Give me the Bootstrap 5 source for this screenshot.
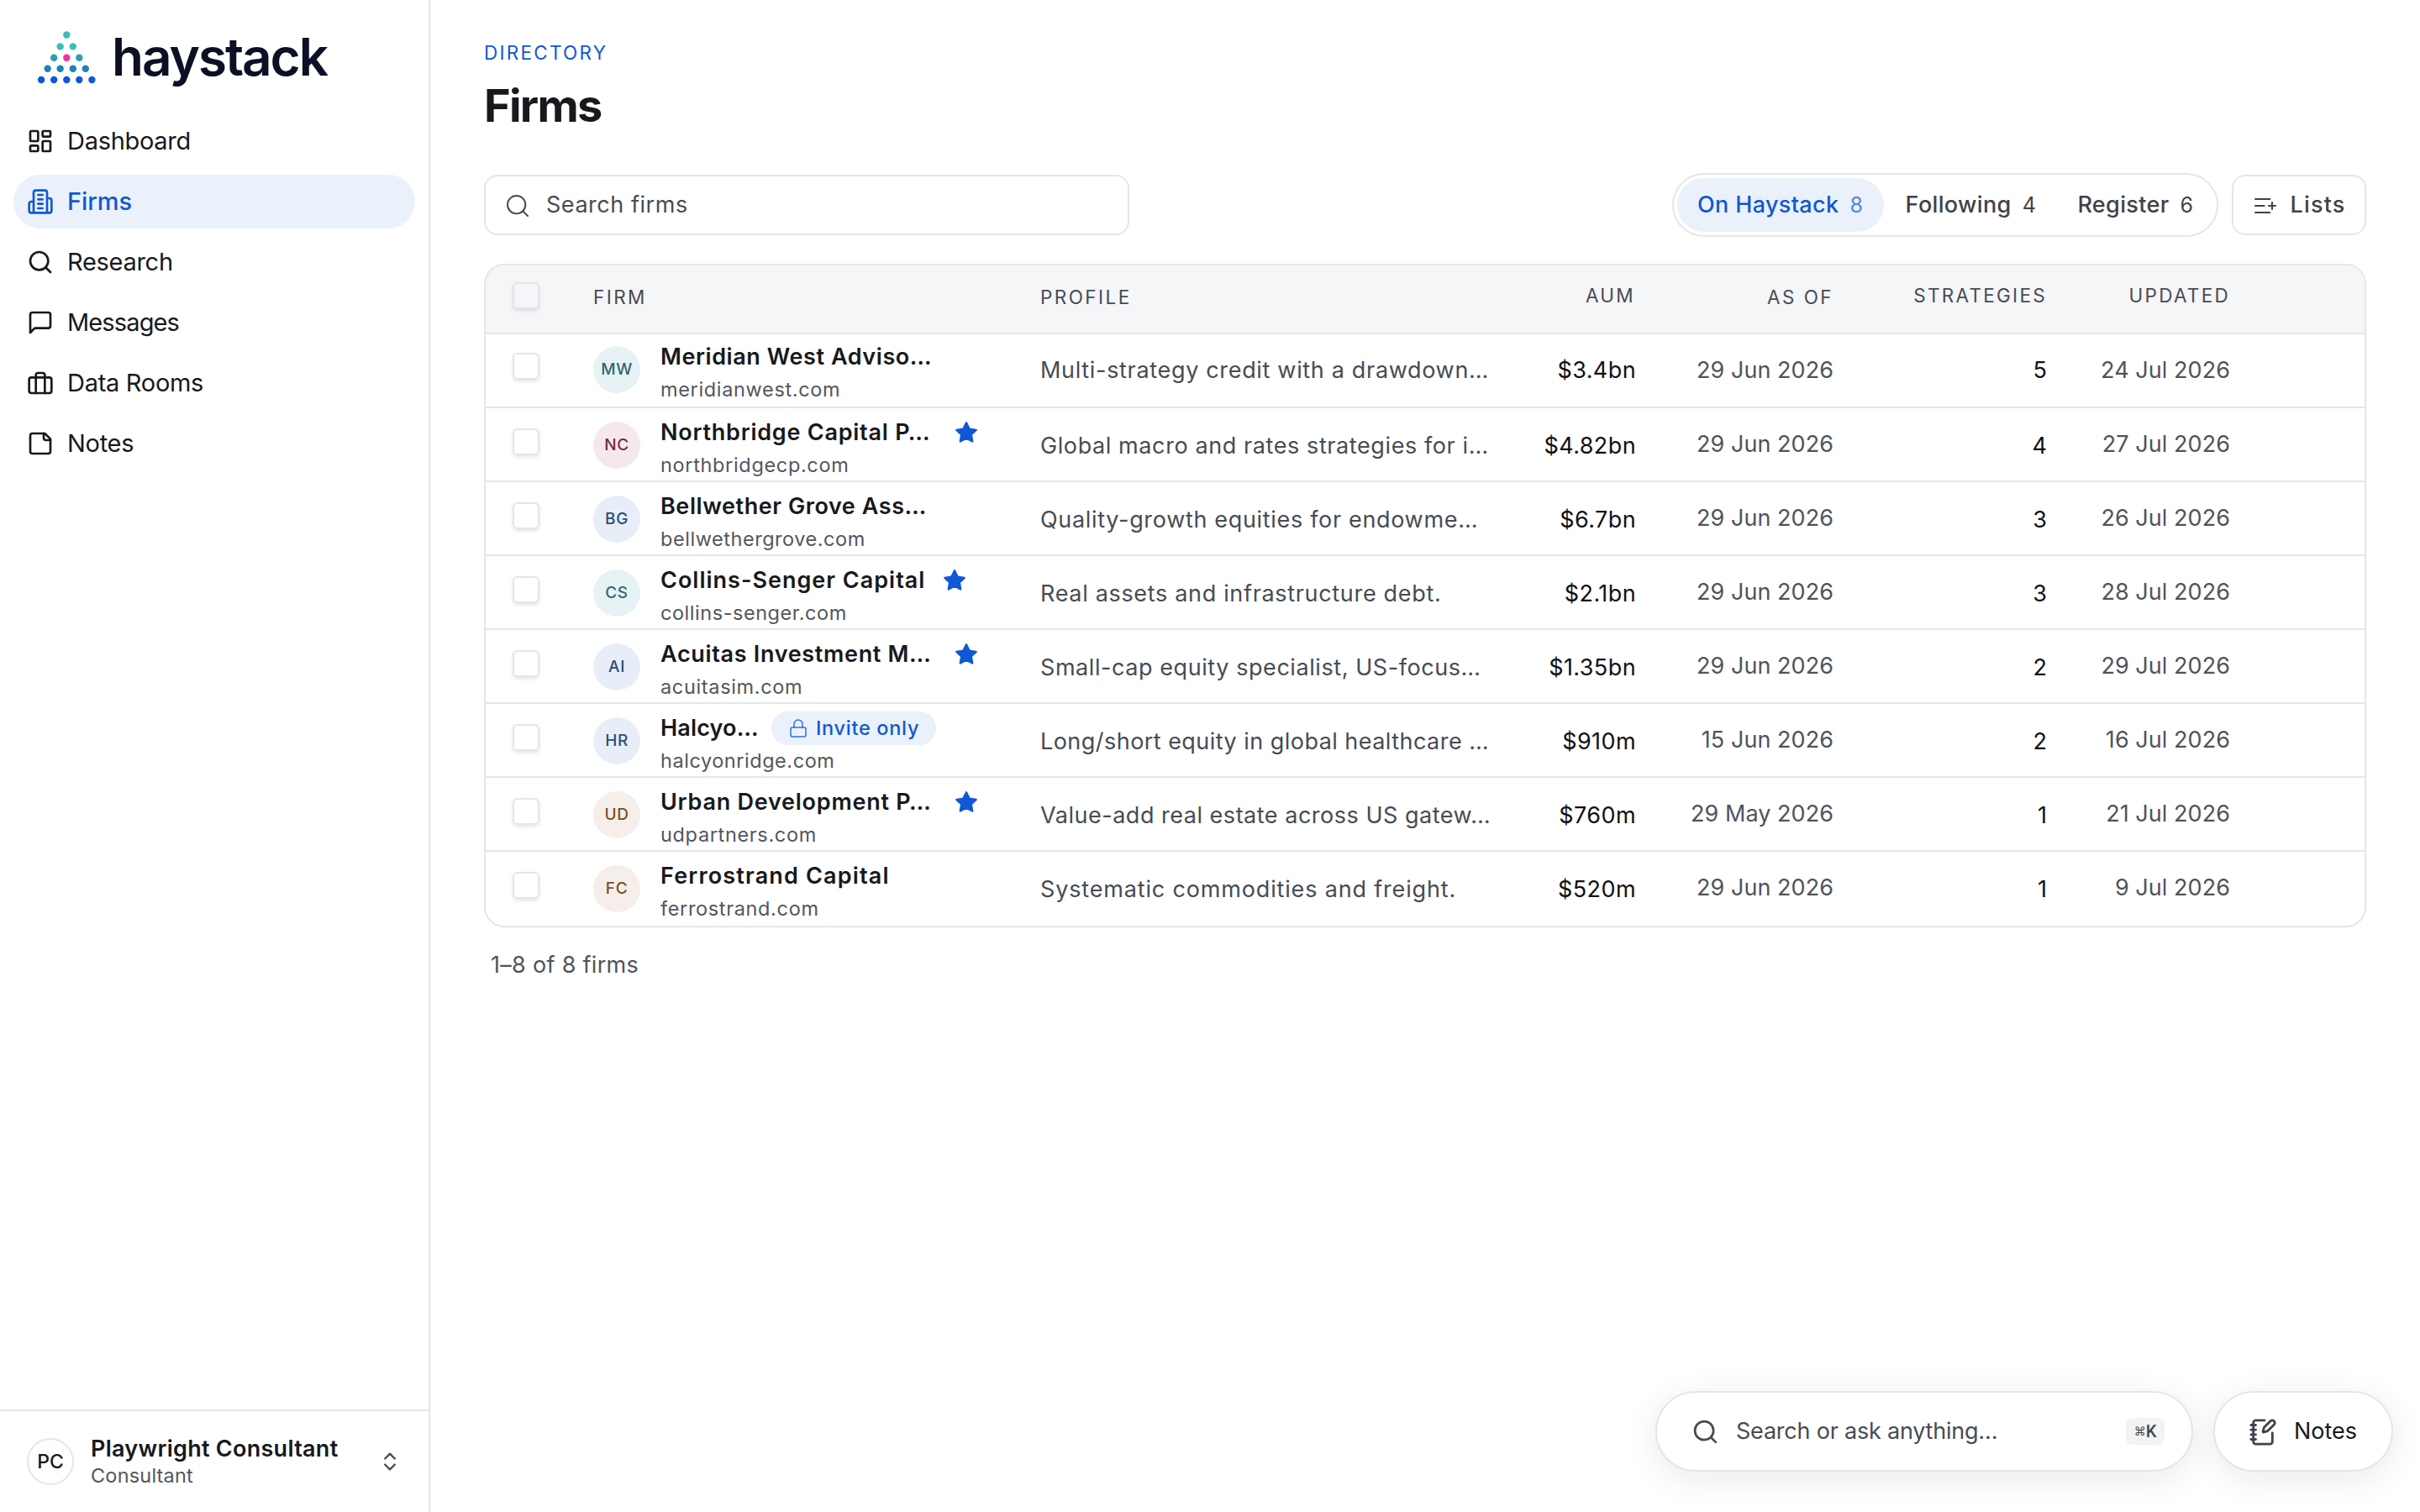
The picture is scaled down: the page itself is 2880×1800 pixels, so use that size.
<!DOCTYPE html>
<html lang="en">
<head>
<meta charset="utf-8">
<title>Firms – haystack</title>
<link rel="stylesheet" href="https://cdn.jsdelivr.net/npm/bootstrap@5.3.0/dist/css/bootstrap.min.css">
<style>
:root{--ink:#17191d;--soft:#484b53;--blue:#1158d0;--tint:#eaf1fb;--line:#e5e6e8}
body{font-family:Inter,"Noto Sans",sans-serif;font-size:27px;color:var(--ink);background:#fff;width:2880px;height:1800px;overflow:hidden;font-feature-settings:"liga" 0}
svg{fill:none;stroke:currentColor;stroke-width:2;stroke-linecap:round;stroke-linejoin:round;flex:none;display:block}
.thin{stroke-width:1.5}
/* sidebar */
.side{width:512px;border-right:2px solid var(--line)}
.brand{height:136px;padding:0 0 0 40px}
.brand svg{stroke:none;margin-right:17px}
.wordmark{font-size:62px;font-weight:600;letter-spacing:-.033em;line-height:1;color:#0b1024}
.side .nav{padding:0 16px;gap:8px}
.side .nav-link{height:64px;padding:0 16px;gap:16px;border-radius:32px;font-size:29px;letter-spacing:-.01em;color:var(--ink)}
.side .nav-link.active{background:var(--tint);color:var(--blue);font-weight:500;letter-spacing:-.002em}
.side .msgs{letter-spacing:-.03em}
.account{height:122px;border-top:2px solid var(--line);padding:0 32px}
.me{width:56px;height:56px;border:2px solid var(--line);font-size:23px;font-weight:500}
.who{margin:0 0 2px 20px;flex:1}
.who-name{font-weight:600;line-height:34px;letter-spacing:.01em}
.who-role{font-size:23.5px;line-height:29px;color:#53565d;letter-spacing:.008em}
/* main */
.main{padding:44px 64px 0;flex:1;min-width:0}
.eyebrow{font-size:22.5px;line-height:36px;letter-spacing:.1em;font-weight:400;color:var(--blue);padding-top:1px;height:36px}
.title{font-size:54px;font-weight:700;line-height:68px;letter-spacing:-.032em;margin:12px 0 46px}
.tools{height:76px}
.searchbox{width:768px;height:72px;border:2px solid var(--line);border-radius:16px;padding:1px 22px 0;gap:18px;color:var(--soft);letter-spacing:.02em}
.tabs{height:76px;width:650px;border:2px solid var(--line);border-radius:38px;padding:4px;color:#3f424a;font-weight:500;letter-spacing:.013em;margin-right:16px}
.tab{height:64px;border-radius:32px;padding:1px 24px 0;gap:13px;white-space:nowrap}
.tab small{font-size:25px;font-weight:400;letter-spacing:0}
.tab.on{background:var(--tint);color:var(--blue);width:246px}
.tab.on small{color:#5185dc}
.lists{width:160px;height:72px;border:2px solid var(--line);border-radius:16px;gap:13px;font-weight:500;color:#3f424a;letter-spacing:.045em;padding-top:1px}
/* table */
.sheet{border:2px solid var(--line);border-radius:24px;overflow:hidden;margin-top:32px}
.sheet table{table-layout:fixed;width:2236px;border-collapse:separate;border-spacing:0}
.sheet th,.sheet td{padding:0 24px;vertical-align:middle;border-bottom:2px solid var(--line);white-space:nowrap;line-height:36px}
.sheet th{height:82px;background:#f5f6f8;font-size:22.5px;font-weight:400;letter-spacing:.102em;color:var(--soft);padding-bottom:8px}
.sheet th.low{padding-bottom:4px;letter-spacing:.108em}
.sheet td{height:88px;padding-top:3px}
.sheet tbody tr:first-child td{padding-top:0;padding-bottom:1px}
.sheet tbody tr:last-child td{border-bottom-color:transparent}
.sheet thead .pick{padding:0 0 9px 32px}
.sheet tbody tr .pick{padding:0 0 6px 32px}
.sheet tbody tr:first-child .pick{padding-bottom:10px}
.tick{width:32px;height:32px;border:2px solid #e4e5e9;border-radius:6px;box-shadow:0 2px 4px rgba(20,25,40,.12)}
.sheet td.desc{color:var(--soft);letter-spacing:.025em;padding-right:0}
tr:nth-child(2) .desc{letter-spacing:.022em!important}
tr:nth-child(5) .desc{letter-spacing:.021em!important}
tr:nth-child(6) .desc{letter-spacing:.017em!important}
tr:nth-child(7) .desc{letter-spacing:.019em!important}
tr:nth-child(8) .desc{letter-spacing:.031em!important}
.sheet td.date,.sheet tbody tr:first-child td.date{color:#50535b;letter-spacing:.002em;padding-top:0;padding-bottom:1px}
.sheet td.num{letter-spacing:0;font-weight:400;color:#101216}
.sheet td.aum{letter-spacing:.015em;padding-right:23px}
.ava{width:56px;height:56px;border-radius:50%;font-size:19px;font-weight:500;letter-spacing:.03em;flex:none;margin:0 24px 3px 0}
.teal{background:#e7f2f4;color:#2f6773}.rose{background:#f5e8ed;color:#762b48}.navy{background:#e8eef7;color:#2d4b7b}.clay{background:#f5eeea;color:#7b4f22}
.firm{margin-top:2px}
.fname{height:44px;font-weight:600;letter-spacing:.021em}
.fname>span:first-child{width:326px;padding-top:1px}
.fname svg{color:#0f58d6;fill:currentColor;margin-left:24px}
.fname .full{width:312px!important}
.fname .short{width:108px!important}
.site{font-size:23.5px;line-height:34px!important;letter-spacing:.028em;color:#53565d}
tr:nth-child(3) .site,tr:nth-child(4) .site,tr:nth-child(6) .site{letter-spacing:.023em}
tr:nth-child(2) .fname,tr:nth-child(7) .fname{letter-spacing:.028em}
tr:nth-child(4) .fname{letter-spacing:.037em}
tr:nth-child(5) .fname{letter-spacing:.025em}
tr:nth-child(8) .fname{letter-spacing:.043em}
tr:nth-child(6) .fname{letter-spacing:.006em}
.invite{height:40px;margin-left:24px;border-radius:20px;background:var(--tint);color:var(--blue);font-size:23.5px;font-weight:500;letter-spacing:.03em;padding:0 20px;gap:9px}
.sheet svg.lock{fill:none;margin:0;color:#2f6ddc}
.tally{margin:25px 0 0 8px;line-height:40px;color:#50535b;letter-spacing:.011em}
/* floating bar */
.dock{position:absolute;right:32px;bottom:48px;gap:24px}
.pill{height:96px;border:2px solid var(--line);border-radius:48px;background:#fff;box-shadow:0 8px 40px rgba(20,25,40,.09)}
.ask{width:640px;padding:0 32px 0 41px;color:var(--soft)}
.ask span{margin-left:20px;flex:1;letter-spacing:-.008em;padding-top:1px}
.keys{width:46px;height:32px;border-radius:8px;background:#f3f3f4;color:#3f4650;font:500 20px/32px Roboto,sans-serif}
.keys i{font:14px/32px "DejaVu Sans",sans-serif}
.jot{width:214px;padding:1px 0 0 40px;gap:20px}
.jot svg{color:#40434b}
</style>
<script src="https://cdn.jsdelivr.net/npm/bootstrap@5.3.0/dist/js/bootstrap.bundle.min.js"></script>
</head>
<body class="d-flex position-relative">
<svg width="0" height="0" class="position-absolute"><defs>
<symbol id="find" viewBox="0 0 24 24"><circle cx="11" cy="11" r="8"/><path d="m21 21-4.3-4.3"/></symbol>
<symbol id="star" viewBox="0 0 24 24"><path d="M12 2l3.09 6.26L22 9.27l-5 4.87 1.18 6.88L12 17.77l-6.18 3.25L7 14.14 2 9.27l6.91-1.01z"/></symbol>
</defs></svg>

<aside class="side d-flex flex-column flex-shrink-0">
  <div class="brand d-flex align-items-center">
    <svg width="76" height="70" viewBox="40 34 76 70">
      <g fill="#3bbfb2"><circle cx="79.3" cy="42.5" r="4.2"/><circle cx="71.7" cy="56.4" r="4.2"/><circle cx="86.8" cy="56.4" r="4.2"/></g>
      <g fill="#28a0b2"><circle cx="64.2" cy="69.8" r="4.2"/><circle cx="94.3" cy="69.8" r="4.2"/></g><circle cx="79.3" cy="69.8" r="4.2" fill="#f2309b"/>
      <g fill="#2080b8"><circle cx="56.7" cy="82.7" r="4.2"/><circle cx="71.7" cy="82.7" r="4.2"/><circle cx="86.8" cy="82.7" r="4.2"/><circle cx="101.8" cy="82.7" r="4.2"/></g>
      <g fill="#1158d2"><circle cx="49.1" cy="96" r="4.2"/><circle cx="64.2" cy="96" r="4.2"/><circle cx="79.3" cy="96" r="4.2"/><circle cx="94.3" cy="96" r="4.2"/><circle cx="109.4" cy="96" r="4.2"/></g>
    </svg>
    <span class="wordmark">haystack</span>
  </div>
  <nav class="nav flex-column flex-nowrap flex-grow-1">
    <a class="nav-link d-flex align-items-center"><svg width="32" height="32" viewBox="0 0 24 24"><rect x="3" y="3" width="7" height="9" rx="1"/><rect x="14" y="3" width="7" height="5" rx="1"/><rect x="14" y="12" width="7" height="9" rx="1"/><rect x="3" y="16" width="7" height="5" rx="1"/></svg>Dashboard</a>
    <a class="nav-link active d-flex align-items-center"><svg width="32" height="32" viewBox="0 0 24 24"><path d="M6 22V4a2 2 0 0 1 2-2h8a2 2 0 0 1 2 2v18ZM6 12H4a2 2 0 0 0-2 2v6a2 2 0 0 0 2 2h2M18 9h2a2 2 0 0 1 2 2v9a2 2 0 0 1-2 2h-2M10 6h4M10 10h4M10 14h4M10 18h4"/></svg>Firms</a>
    <a class="nav-link d-flex align-items-center"><svg width="32" height="32"><use href="#find"/></svg>Research</a>
    <a class="nav-link msgs d-flex align-items-center"><svg width="32" height="32" viewBox="0 0 24 24"><path d="M21 15a2 2 0 0 1-2 2H7l-4 4V5a2 2 0 0 1 2-2h14a2 2 0 0 1 2 2z"/></svg>Messages</a>
    <a class="nav-link d-flex align-items-center"><svg width="32" height="32" viewBox="0 0 24 24"><rect x="2" y="7" width="20" height="14" rx="2"/><path d="M16 21V5a2 2 0 0 0-2-2h-4a2 2 0 0 0-2 2v16"/></svg>Data Rooms</a>
    <a class="nav-link d-flex align-items-center"><svg width="32" height="32" viewBox="0 0 24 24"><path d="M16 3H5a2 2 0 0 0-2 2v14a2 2 0 0 0 2 2h14a2 2 0 0 0 2-2V8Z"/><path d="M15 3v4a2 2 0 0 0 2 2h4"/></svg>Notes</a>
  </nav>
  <div class="account d-flex align-items-center">
    <div class="me rounded-circle d-flex align-items-center justify-content-center">PC</div>
    <div class="who"><div class="who-name">Playwright Consultant</div><div class="who-role">Consultant</div></div>
    <svg width="28" height="28" viewBox="0 0 24 24" color="#484b53"><path d="m7 15 5 5 5-5M7 9l5-5 5 5"/></svg>
  </div>
</aside>

<main class="main">
  <div class="eyebrow">DIRECTORY</div>
  <h1 class="title">Firms</h1>
  <div class="tools d-flex align-items-center">
    <div class="searchbox d-flex align-items-center me-auto"><svg class="thin" width="32" height="32"><use href="#find"/></svg>Search firms</div>
    <div class="tabs d-flex justify-content-between">
      <div class="tab on d-flex align-items-center">On Haystack<small>8</small></div>
      <div class="tab d-flex align-items-center">Following<small>4</small></div>
      <div class="tab d-flex align-items-center">Register<small>6</small></div>
    </div>
    <div class="lists d-flex align-items-center justify-content-center"><svg class="thin" width="32" height="32" viewBox="0 0 24 24"><path d="M11 12H3M16 6H3M16 18H3M18 9v6M21 12h-6"/></svg>Lists</div>
  </div>

  <div class="sheet">
    <table>
      <colgroup><col width="104"><col width="532"><col width="558"><col width="198"><col width="236"><col width="254"><col width="218"><col width="136"></colgroup>
      <thead><tr><th class="pick"><div class="tick"></div></th><th class="low">FIRM</th><th class="low">PROFILE</th><th class="text-end">AUM</th><th class="low text-end">AS OF</th><th class="text-end">STRATEGIES</th><th class="text-end">UPDATED</th><th></th></tr></thead>
      <tbody>
        <tr><td class="pick"><div class="tick"></div></td>
          <td><div class="firm d-flex align-items-center"><div class="ava teal d-flex align-items-center justify-content-center">MW</div><div><div class="fname d-flex align-items-center"><span>Meridian West Adviso…</span></div><div class="site">meridianwest.com</div></div></div></td>
          <td class="desc">Multi-strategy credit with a drawdown…</td><td class="num aum text-end">$3.4bn</td><td class="date text-end">29 Jun 2026</td><td class="num text-end">5</td><td class="date text-end">24 Jul 2026</td><td></td></tr>
        <tr><td class="pick"><div class="tick"></div></td>
          <td><div class="firm d-flex align-items-center"><div class="ava rose d-flex align-items-center justify-content-center">NC</div><div><div class="fname d-flex align-items-center"><span>Northbridge Capital P…</span><svg width="28" height="28"><use href="#star"/></svg></div><div class="site">northbridgecp.com</div></div></div></td>
          <td class="desc">Global macro and rates strategies for i…</td><td class="num aum text-end">$4.82bn</td><td class="date text-end">29 Jun 2026</td><td class="num text-end">4</td><td class="date text-end">27 Jul 2026</td><td></td></tr>
        <tr><td class="pick"><div class="tick"></div></td>
          <td><div class="firm d-flex align-items-center"><div class="ava navy d-flex align-items-center justify-content-center">BG</div><div><div class="fname d-flex align-items-center"><span>Bellwether Grove Ass…</span></div><div class="site">bellwethergrove.com</div></div></div></td>
          <td class="desc">Quality-growth equities for endowme…</td><td class="num aum text-end">$6.7bn</td><td class="date text-end">29 Jun 2026</td><td class="num text-end">3</td><td class="date text-end">26 Jul 2026</td><td></td></tr>
        <tr><td class="pick"><div class="tick"></div></td>
          <td><div class="firm d-flex align-items-center"><div class="ava teal d-flex align-items-center justify-content-center">CS</div><div><div class="fname d-flex align-items-center"><span class="full">Collins-Senger Capital</span><svg width="28" height="28"><use href="#star"/></svg></div><div class="site">collins-senger.com</div></div></div></td>
          <td class="desc">Real assets and infrastructure debt.</td><td class="num aum text-end">$2.1bn</td><td class="date text-end">29 Jun 2026</td><td class="num text-end">3</td><td class="date text-end">28 Jul 2026</td><td></td></tr>
        <tr><td class="pick"><div class="tick"></div></td>
          <td><div class="firm d-flex align-items-center"><div class="ava navy d-flex align-items-center justify-content-center">AI</div><div><div class="fname d-flex align-items-center"><span>Acuitas Investment M…</span><svg width="28" height="28"><use href="#star"/></svg></div><div class="site">acuitasim.com</div></div></div></td>
          <td class="desc">Small-cap equity specialist, US-focus…</td><td class="num aum text-end">$1.35bn</td><td class="date text-end">29 Jun 2026</td><td class="num text-end">2</td><td class="date text-end">29 Jul 2026</td><td></td></tr>
        <tr><td class="pick"><div class="tick"></div></td>
          <td><div class="firm d-flex align-items-center"><div class="ava navy d-flex align-items-center justify-content-center">HR</div><div><div class="fname d-flex align-items-center"><span class="short">Halcyo…</span><span class="invite d-flex align-items-center"><svg class="lock thin" width="24" height="24" viewBox="0 0 24 24"><rect x="3" y="11" width="18" height="11" rx="2"/><path d="M7 11V7a5 5 0 0 1 10 0v4"/></svg>Invite only</span></div><div class="site">halcyonridge.com</div></div></div></td>
          <td class="desc">Long/short equity in global healthcare …</td><td class="num aum text-end">$910m</td><td class="date text-end">15 Jun 2026</td><td class="num text-end">2</td><td class="date text-end">16 Jul 2026</td><td></td></tr>
        <tr><td class="pick"><div class="tick"></div></td>
          <td><div class="firm d-flex align-items-center"><div class="ava clay d-flex align-items-center justify-content-center">UD</div><div><div class="fname d-flex align-items-center"><span>Urban Development P…</span><svg width="28" height="28"><use href="#star"/></svg></div><div class="site">udpartners.com</div></div></div></td>
          <td class="desc">Value-add real estate across US gatew…</td><td class="num aum text-end">$760m</td><td class="date text-end">29 May 2026</td><td class="num text-end">1</td><td class="date text-end">21 Jul 2026</td><td></td></tr>
        <tr><td class="pick"><div class="tick"></div></td>
          <td><div class="firm d-flex align-items-center"><div class="ava clay d-flex align-items-center justify-content-center">FC</div><div><div class="fname d-flex align-items-center"><span>Ferrostrand Capital</span></div><div class="site">ferrostrand.com</div></div></div></td>
          <td class="desc">Systematic commodities and freight.</td><td class="num aum text-end">$520m</td><td class="date text-end">29 Jun 2026</td><td class="num text-end">1</td><td class="date text-end">9 Jul 2026</td><td></td></tr>
      </tbody>
    </table>
  </div>
  <div class="tally">1–8 of 8 firms</div>
</main>

<div class="dock d-flex">
  <div class="pill ask d-flex align-items-center"><svg width="33" height="33"><use href="#find"/></svg><span>Search or ask anything…</span><div class="keys d-flex justify-content-center"><i>⌘</i>K</div></div>
  <div class="pill jot d-flex align-items-center"><svg width="34" height="34" viewBox="0 0 24 24"><path d="M13.4 2H6a2 2 0 0 0-2 2v16a2 2 0 0 0 2 2h12a2 2 0 0 0 2-2v-7.4M2 6h4M2 10h4M2 14h4M2 18h4"/><path d="M21.378 5.626a1 1 0 1 0-3.004-3.004l-5.01 5.012a2 2 0 0 0-.506.854l-.837 2.87a.5.5 0 0 0 .62.62l2.87-.837a2 2 0 0 0 .854-.506z"/></svg>Notes</div>
</div>
</body>
</html>
